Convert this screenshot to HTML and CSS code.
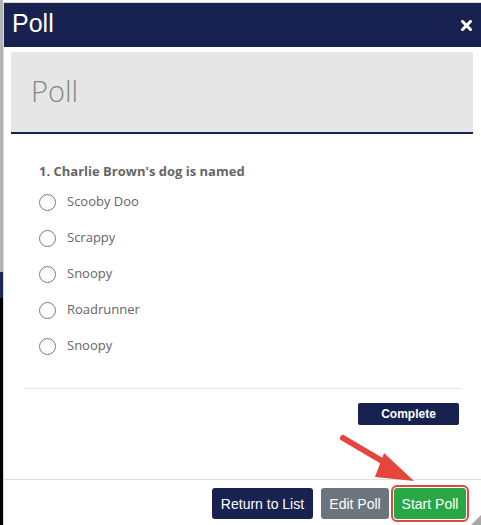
FILE: index.html
```html
<!DOCTYPE html>
<html>
<head>
<meta charset="utf-8">
<link rel="stylesheet" href="styles.css">
</head>
<body>
<div class="backdrop"></div>
<div class="modal">
  <div class="modal-header">
    <h1 class="modal-title">Poll</h1>
    <button class="close" aria-label="Close">
      <svg width="11" height="11" viewBox="0 0 11 11"><path d="M1.5 1.5 L9.5 9.5 M9.5 1.5 L1.5 9.5" stroke="#fff" stroke-width="3" stroke-linecap="square"/></svg>
    </button>
  </div>
  <div class="modal-body">
    <div class="jumbotron"><span class="jumbo-title">Poll</span></div>
    <div class="poll-panel">
      <div class="question">1. Charlie Brown's dog is named</div>
      <ul class="options">
        <li class="option"><span class="radio"></span><span class="label">Scooby Doo</span></li>
        <li class="option"><span class="radio"></span><span class="label">Scrappy</span></li>
        <li class="option"><span class="radio"></span><span class="label">Snoopy</span></li>
        <li class="option"><span class="radio"></span><span class="label">Roadrunner</span></li>
        <li class="option"><span class="radio"></span><span class="label">Snoopy</span></li>
      </ul>
      <div class="divider"></div>
      <div class="complete-row"><button class="btn-complete">Complete</button></div>
    </div>
  </div>
  <div class="modal-footer">
    <button class="btn btn-navy">Return to List</button>
    <button class="btn btn-gray">Edit Poll</button>
    <button class="btn btn-green">Start Poll</button>
  </div>
  <div class="resize"></div>
</div>
<svg class="arrow" width="90" height="60" viewBox="0 0 90 60">
  <line x1="5" y1="6" x2="56" y2="36" stroke="#e5463c" stroke-width="6" stroke-linecap="round"/>
  <polygon points="46,21 76,49 37,45" fill="#e5463c"/>
</svg>
</body>
</html>
```
FILE: styles.css
```css
html, body {
  margin: 0;
  padding: 0;
}
body {
  width: 481px;
  height: 525px;
  overflow: hidden;
  position: relative;
  background: #fff;
  font-family: "Open Sans", "Liberation Sans", sans-serif;
}
.backdrop {
  position: absolute;
  left: 0;
  top: 0;
  width: 3px;
  height: 525px;
  background: linear-gradient(to bottom, #b4b4b4 0, #b4b4b4 272px, #1c2752 272px, #1c2752 298px, #000 298px);
}
.modal {
  position: absolute;
  left: 3px;
  top: 2px;
  width: 478px;
  height: 523px;
  box-sizing: border-box;
  border-left: 1px solid #d8d8d8;
  border-top: 1px solid #d8d8d8;
  background: #fff;
  display: flex;
  flex-direction: column;
}
.modal-header {
  height: 44px;
  background: #172250;
  display: flex;
  align-items: center;
  justify-content: space-between;
  padding: 0 9px 0 8px;
}
.modal-title {
  margin: 0;
  font-family: "Liberation Sans", Arial, sans-serif;
  font-weight: normal;
  font-size: 25px;
  color: #fff;
  line-height: 30px;
  margin-top: -4px;
}
.close {
  background: none;
  border: 0;
  padding: 0;
  width: 11px;
  height: 11px;
  display: flex;
}
.modal-body {
  padding: 5px 8px 0 7px;
  flex: 1;
}
.jumbotron {
  height: 80px;
  background: #e6e6e6;
  border-bottom: 2px solid #172250;
  display: flex;
  align-items: center;
  padding-left: 20px;
}
.jumbo-title {
  font-family: "Open Sans", sans-serif;
  font-weight: 300;
  font-size: 29px;
  color: #858585;
  margin-top: -4px;
}
.poll-panel {
  margin: 0 13px 0 13px;
}
.question {
  margin-top: 27px;
  padding-left: 15px;
  height: 20px;
  line-height: 20px;
  font-weight: 700;
  font-size: 13px;
  color: #666;
  margin-bottom: 3px;
}
.options {
  list-style: none;
  margin: 0;
  padding: 0 0 0 15px;
}
.option {
  height: 36px;
  display: flex;
  align-items: center;
}
.radio {
  border: 1px solid #7a7a7a;
  border-radius: 50%;
  box-sizing: border-box;
  width: 17px;
  height: 17px;
  margin-right: 11px;
}
.label {
  font-size: 13px;
  color: #666;
  line-height: 20px;
  margin-top: -2px;
}
.divider {
  margin-top: 24px;
  height: 1px;
  background: #e2e2e2;
}
.complete-row {
  display: flex;
  justify-content: flex-end;
  margin-top: 14px;
  padding-right: 1px;
}
.btn-complete {
  width: 101px;
  height: 22px;
  background: #172250;
  color: #fff;
  border: 0;
  border-radius: 2px;
  font-family: "Liberation Sans", Arial, sans-serif;
  font-weight: 700;
  font-size: 12px;
  padding: 0;
}
.modal-footer {
  border-top: 1px solid #e0e0e0;
  height: 46px;
  box-sizing: border-box;
  display: flex;
  justify-content: flex-end;
  align-items: flex-start;
  padding: 8px 15px 0 0;
  gap: 8px;
}
.btn {
  height: 31px;
  border: 0;
  border-radius: 3px;
  color: #fff;
  font-family: "Liberation Sans", Arial, sans-serif;
  font-size: 14px;
  padding: 0;
}
.btn-navy {
  width: 101px;
  background: #172250;
}
.btn-gray {
  width: 68px;
  background: #6c757d;
}
.btn-green {
  width: 72px;
  margin-left: -3px;
  background: #28a745;
  outline: 2px solid #e5463c;
  outline-offset: 1px;
}
.resize {
  position: absolute;
  right: 0;
  bottom: 0;
  width: 0;
  height: 0;
  border-left: 10px solid transparent;
  border-bottom: 10px solid #a8a8a8;
}
.arrow {
  position: absolute;
  left: 338px;
  top: 432px;
}
```
